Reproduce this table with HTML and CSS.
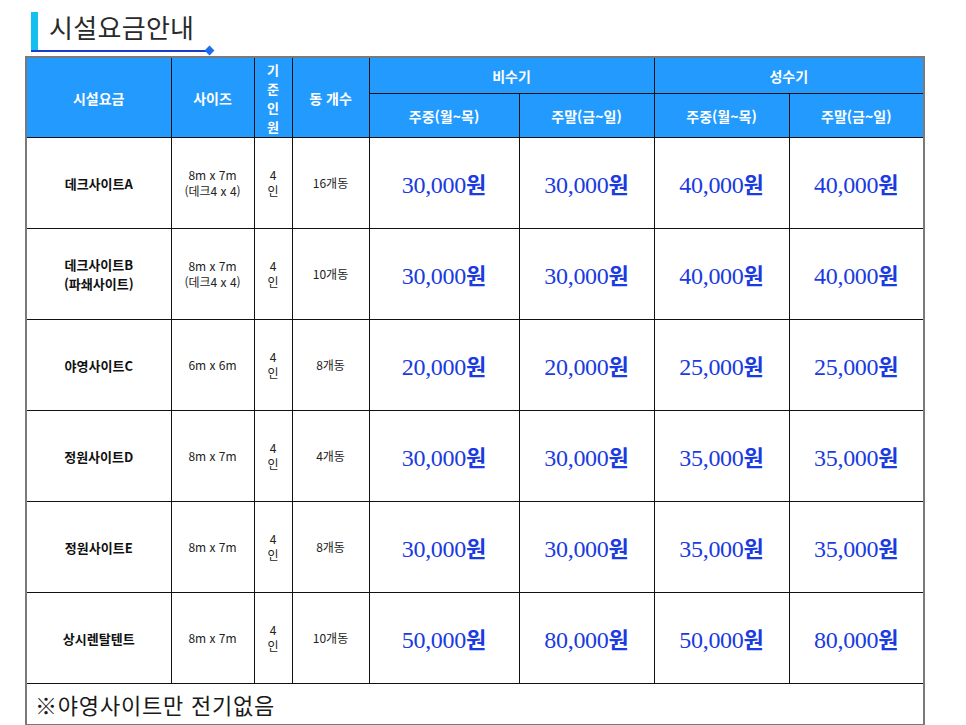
FILE: index.html
```html
<!DOCTYPE html>
<html lang="ko">
<head>
<meta charset="utf-8">
<link rel="stylesheet" href="styles.css">
</head>
<body>
<div class="page">
  <div class="title">
    <span class="title-bar"></span>
    <h1 class="title-text">시설요금안내</h1>
    <span class="title-line"></span>
    <span class="title-dot"></span>
  </div>
  <table class="fees">
    <colgroup>
      <col class="c-name"><col class="c-size"><col class="c-ppl"><col class="c-cnt">
      <col class="c-p1"><col class="c-p2"><col class="c-p3"><col class="c-p4">
    </colgroup>
    <thead>
      <tr class="h1">
        <th rowspan="2">시설요금</th>
        <th rowspan="2">사이즈</th>
        <th rowspan="2" class="vert">기<br>준<br>인<br>원</th>
        <th rowspan="2">동 개수</th>
        <th colspan="2">비수기</th>
        <th colspan="2">성수기</th>
      </tr>
      <tr class="h2">
        <th>주중(월~목)</th><th>주말(금~일)</th><th>주중(월~목)</th><th>주말(금~일)</th>
      </tr>
    </thead>
    <tbody>
      <tr>
        <td class="name">데크사이트A</td>
        <td class="small">8m x 7m<br>(데크4 x 4)</td>
        <td class="small">4<br>인</td>
        <td class="small">16개동</td>
        <td class="price">30,000<b>원</b></td><td class="price">30,000<b>원</b></td>
        <td class="price">40,000<b>원</b></td><td class="price">40,000<b>원</b></td>
      </tr>
      <tr>
        <td class="name">데크사이트B<br>(파쇄사이트)</td>
        <td class="small">8m x 7m<br>(데크4 x 4)</td>
        <td class="small">4<br>인</td>
        <td class="small">10개동</td>
        <td class="price">30,000<b>원</b></td><td class="price">30,000<b>원</b></td>
        <td class="price">40,000<b>원</b></td><td class="price">40,000<b>원</b></td>
      </tr>
      <tr>
        <td class="name">야영사이트C</td>
        <td class="small">6m x 6m</td>
        <td class="small">4<br>인</td>
        <td class="small">8개동</td>
        <td class="price">20,000<b>원</b></td><td class="price">20,000<b>원</b></td>
        <td class="price">25,000<b>원</b></td><td class="price">25,000<b>원</b></td>
      </tr>
      <tr>
        <td class="name">정원사이트D</td>
        <td class="small">8m x 7m</td>
        <td class="small">4<br>인</td>
        <td class="small">4개동</td>
        <td class="price">30,000<b>원</b></td><td class="price">30,000<b>원</b></td>
        <td class="price">35,000<b>원</b></td><td class="price">35,000<b>원</b></td>
      </tr>
      <tr>
        <td class="name">정원사이트E</td>
        <td class="small">8m x 7m</td>
        <td class="small">4<br>인</td>
        <td class="small">8개동</td>
        <td class="price">30,000<b>원</b></td><td class="price">30,000<b>원</b></td>
        <td class="price">35,000<b>원</b></td><td class="price">35,000<b>원</b></td>
      </tr>
      <tr>
        <td class="name">상시렌탈텐트</td>
        <td class="small">8m x 7m</td>
        <td class="small">4<br>인</td>
        <td class="small">10개동</td>
        <td class="price">50,000<b>원</b></td><td class="price">80,000<b>원</b></td>
        <td class="price">50,000<b>원</b></td><td class="price">80,000<b>원</b></td>
      </tr>
      <tr class="note-row">
        <td colspan="8" class="note">※야영사이트만 전기없음</td>
      </tr>
    </tbody>
  </table>
</div>
</body>
</html>
```
FILE: styles.css
```css
html, body {
  margin: 0;
  padding: 0;
  background: #ffffff;
}
body {
  font-family: "Noto Sans CJK KR", "Noto Sans", sans-serif;
  color: #111;
}
.page {
  padding: 12px 0 0 25px;
  width: 898px;
}
.title {
  position: relative;
  height: 44px;
  display: flex;
  align-items: flex-start;
}
.title-bar {
  width: 7px;
  height: 38px;
  margin-left: 6px;
  background: #13c0f0;
}
.title-text {
  margin: -5px 0 0 11px;
  font-size: 26px;
  font-weight: 400;
  line-height: 40px;
  color: #2a2a2a;
  letter-spacing: 0.3px;
}
.title-line {
  position: absolute;
  left: 6px;
  top: 38px;
  width: 180px;
  height: 2px;
  background: #1a3ccc;
}
.title-dot {
  position: absolute;
  left: 181px;
  top: 35px;
  width: 7px;
  height: 7px;
  background: #1e6cf0;
  transform: rotate(45deg);
}
.fees {
  border-collapse: collapse;
  table-layout: fixed;
  width: 898px;
  border: 2px solid #7a7a7a;
}
.c-name { width: 145px; }
.c-size { width: 83px; }
.c-ppl { width: 38px; }
.c-cnt { width: 77px; }
.c-p1 { width: 150px; }
.c-p2 { width: 135px; }
.c-p3 { width: 135px; }
.c-p4 { width: 135px; }
.fees th, .fees td {
  border: 1.5px solid #111;
  padding: 0;
  text-align: center;
  vertical-align: middle;
}
.fees th {
  background: #239bfe;
  color: #ffffff;
  font-size: 14px;
  font-weight: 700;
  line-height: 18px;
}
.h1 th { height: 35px; }
.h2 th { height: 43px; }
.fees th.vert {
  font-size: 13px;
  line-height: 19px;
}
.fees tbody tr { height: 91px; }
.fees td.name {
  font-size: 13px;
  font-weight: 700;
  line-height: 19px;
}
.fees td.small {
  font-size: 12px;
  line-height: 16px;
  color: #222;
}
.fees td.price {
  font-family: "Liberation Serif", "Noto Serif", serif;
  font-size: 24px;
  color: #1a3be0;
  letter-spacing: -0.3px;
}
.fees td.price b {
  font-family: "Noto Sans CJK KR", sans-serif;
  font-weight: 700;
  font-size: 22px;
  letter-spacing: 0;
}
.fees tr.note-row { height: 41px; }
.fees td.note {
  text-align: left;
  padding-left: 8px;
  font-size: 22px;
  letter-spacing: 0.8px;
  color: #1a1a1a;
  font-weight: 400;
  border-bottom-color: #555;
}
```
